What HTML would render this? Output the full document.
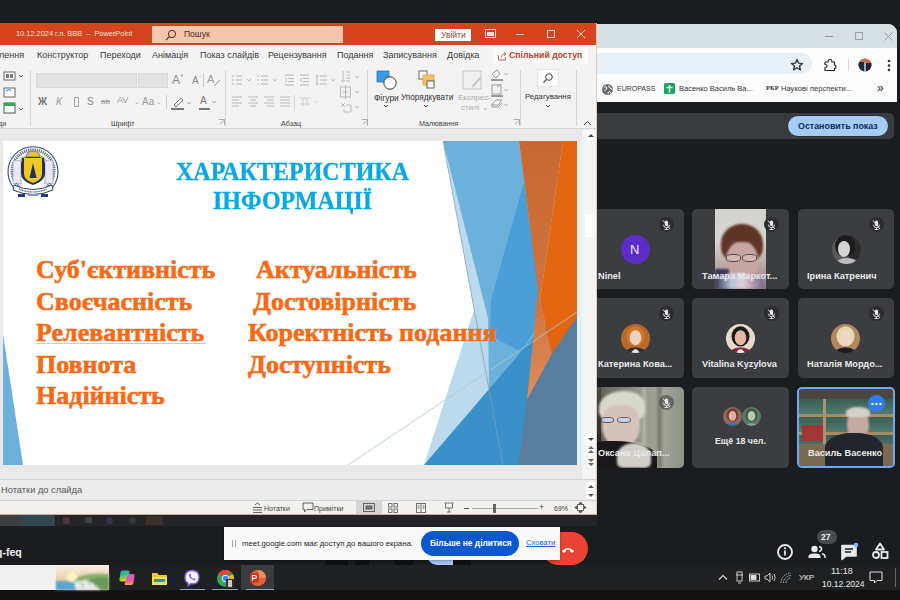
<!DOCTYPE html>
<html><head><meta charset="utf-8">
<style>
*{box-sizing:border-box;margin:0;padding:0}
html,body{width:900px;height:600px;overflow:hidden;background:#1b1c1f;font-family:"Liberation Sans",sans-serif}
.a{position:absolute}
.t{position:absolute;white-space:nowrap;line-height:1}
svg{position:absolute;overflow:visible}
.tab{position:absolute;top:51px;font-size:9px;color:#3a3a3a;white-space:nowrap;line-height:1}
.lbl{position:absolute;font-size:7.2px;color:#444;white-space:nowrap;line-height:1}
.sep{position:absolute;width:1px;background:#d6d6d6}
.nm{position:absolute;font-size:9.2px;font-weight:bold;color:#eaeaea;white-space:nowrap;line-height:1}
.tile{position:absolute;background:#3b3d40;border-radius:5px;overflow:hidden}
.mic{position:absolute;width:15px;height:15px;border-radius:50%;background:#2c2d30}
</style></head><body>
<!-- top dark band -->
<div class="a" style="left:0;top:0;width:900px;height:24px;background:#1b1c20"></div>

<!-- ===== Chrome window ===== -->
<div class="a" style="left:590px;top:24px;width:307px;height:78px;background:#fdfdfd;border-radius:0 9px 0 0;overflow:hidden">
  <div class="a" style="left:0;top:0;width:307px;height:24px;background:#d7e1e4"></div>
  <div class="a" style="left:0;top:29px;width:222px;height:21px;background:#e8f0f8;border-radius:0 11px 11px 0"></div>
</div>
<div class="a" style="left:825px;top:36px;width:8px;height:1px;background:#8a9096"></div>
<div class="a" style="left:855px;top:32px;width:8px;height:8px;border:1px solid #9aa0a6"></div>
<svg style="left:884px;top:32px" width="9" height="9"><path d="M0.5 0.5L8.5 8.5M8.5 0.5L0.5 8.5" stroke="#9aa0a6" stroke-width="1"/></svg>
<svg style="left:790px;top:58px" width="14" height="14"><path d="M7 1.5L8.6 5.2L12.5 5.5L9.5 8L10.5 12L7 9.8L3.5 12L4.5 8L1.5 5.5L5.4 5.2Z" fill="none" stroke="#2a2a2a" stroke-width="1.2" stroke-linejoin="round"/></svg>
<svg style="left:823px;top:58px" width="14" height="14"><path d="M2 4H5Q5 1.5 7 1.5Q9 1.5 9 4H11.5V7Q13 7 13 8.7Q13 10.4 11.5 10.4V12.5H2V9.5Q4 9.5 4 8Q4 6.5 2 6.5Z" fill="none" stroke="#2a2a2a" stroke-width="1.2" stroke-linejoin="round"/></svg>
<div class="a" style="left:848px;top:59px;width:1px;height:12px;background:#d6d6d6"></div>
<svg style="left:858px;top:58px" width="14" height="14"><defs><clipPath id="avc"><circle cx="7" cy="7" r="6.5"/></clipPath></defs><g clip-path="url(#avc)"><rect width="14" height="14" fill="#d8603a"/><rect x="0" y="4" width="6" height="10" fill="#1e2a36"/><rect x="8" y="5" width="6" height="9" fill="#2a2030"/><rect x="6" y="3" width="2" height="11" fill="#8ab0d0"/><rect x="0" y="0" width="14" height="4" fill="#c8704a"/></g></svg>
<svg style="left:887px;top:59px" width="4" height="13"><circle cx="2" cy="2" r="1.3" fill="#333"/><circle cx="2" cy="6.5" r="1.3" fill="#333"/><circle cx="2" cy="11" r="1.3" fill="#333"/></svg>
<svg style="left:601px;top:83px" width="13" height="13"><circle cx="6.5" cy="6.5" r="5.5" fill="#6a6d72"/><path d="M3 4Q5 3 6 5Q5 7 3.5 7.5M8 2.5Q7.5 4.5 9 5Q11 5 11 7M7 11Q7 9 8.5 8.5Q10 9 9.5 10.5" fill="none" stroke="#fff" stroke-width="1"/></svg>
<div class="t" style="left:617px;top:85px;font-size:7px;color:#333">EUROPASS</div>
<div class="a" style="left:664px;top:83px;width:11px;height:11px;background:#1aa260;border-radius:1.5px"></div>
<svg style="left:664px;top:83px" width="11" height="11"><path d="M5.5 2V9.5M2.5 4.5H8.5" stroke="#fff" stroke-width="1.5"/></svg>
<div class="t" style="left:679px;top:84.5px;font-size:7.5px;color:#333">Васенко Василь Ва...</div>
<div class="t" style="left:766px;top:85px;font-size:6.5px;font-weight:bold;color:#333;font-family:'Liberation Serif'">РКР</div>
<div class="t" style="left:781px;top:84.5px;font-size:7.6px;color:#333">Наукові перспекти...</div>
<div class="t" style="left:877px;top:82px;font-size:12px;color:#333">»</div>

<!-- ===== Meet share bar ===== -->
<div class="a" style="left:590px;top:113px;width:304px;height:26px;background:#393b3e;border-radius:0 5px 5px 0"></div>
<div class="a" style="left:787px;top:115px;width:102px;height:22px;background:#a6cbf7;border-radius:11px;border:1px solid #22303c"></div>
<div class="t" style="left:798px;top:121.5px;font-size:8.9px;font-weight:bold;color:#0f2d5e">Остановить показ</div>

<!-- ===== Meet tiles ===== -->
<div class="tile" style="left:587px;top:209px;width:97px;height:80px"></div>
<div class="a" style="left:621px;top:235px;width:29px;height:29px;border-radius:50%;background:#5b2dc8"></div>
<div class="t" style="left:630px;top:243px;font-size:13px;color:#f0e8ff">N</div>
<div class="nm" style="left:598px;top:272px">Ninel</div>

<div class="tile" style="left:692px;top:209px;width:97px;height:80px"></div>
<div class="a" style="left:715px;top:209px;width:51px;height:80px;overflow:hidden;background:linear-gradient(180deg,#d2d2ce 0,#d8d6d2 40%,#b8aaa4 70%,#8a7a88 100%)">
  <div class="a" style="left:6px;top:15px;width:42px;height:38px;border-radius:50% 50% 38% 38%;background:#5e3424;filter:blur(1px)"></div>
  <div class="a" style="left:11px;top:33px;width:32px;height:44px;border-radius:42% 42% 48% 48%;background:#c7a5a2;filter:blur(0.8px)"></div>
  <div class="a" style="left:11px;top:45px;width:15px;height:8px;border-radius:40%;border:1px solid #5a4a4a;background:#d4b8b8"></div>
  <div class="a" style="left:27px;top:45px;width:15px;height:8px;border-radius:40%;border:1px solid #5a4a4a;background:#d4b8b8"></div>
  <div class="a" style="left:0;top:60px;width:14px;height:20px;background:#3a3550;filter:blur(1px)"></div>
  <div class="a" style="left:2px;top:64px;width:47px;height:16px;border-radius:40% 40% 0 0;background:linear-gradient(90deg,#4a4a6a 0,#b8c4d8 30%,#e0d0d8 55%,#7a6a8a 100%);filter:blur(0.8px)"></div>
</div>
<div class="nm" style="left:702px;top:272px">Тамара Маркот...</div>

<div class="tile" style="left:798px;top:209px;width:96px;height:80px"></div>
<svg style="left:831px;top:234px" width="31" height="31"><defs><clipPath id="cir"><circle cx="15.5" cy="15.5" r="14.5"/></clipPath><filter id="fir"><feGaussianBlur stdDeviation="0.7"/></filter></defs><g clip-path="url(#cir)" filter="url(#fir)"><rect width="31" height="31" fill="#5a5a5a"/><rect x="18" width="13" height="31" fill="#2a2a2a"/><ellipse cx="14" cy="12" rx="10" ry="11" fill="#1e1e1e"/><ellipse cx="13" cy="15" rx="6" ry="8" fill="#d4d4d4"/><ellipse cx="16" cy="31" rx="12" ry="7" fill="#bdbdbd"/></g></svg>
<div class="nm" style="left:807px;top:272px">Ірина Катренич</div>

<div class="tile" style="left:587px;top:298px;width:97px;height:80px"></div>
<svg style="left:620.0px;top:322.5px" width="31.0" height="31.0"><defs><clipPath id="cka"><circle cx="15.5" cy="15.5" r="14.5"/></clipPath><filter id="fka"><feGaussianBlur stdDeviation="0.6"/></filter></defs><g clip-path="url(#cka)" filter="url(#fka)"><rect width="31.0" height="31.0" fill="#b86a2a"/><ellipse cx="15.5" cy="13.325" rx="8.99" ry="10.149999999999999" fill="#d0782e"/><ellipse cx="15.5" cy="14.774999999999999" rx="5.800000000000001" ry="7.54" fill="#f0d2c0"/><ellipse cx="15.5" cy="33.0" rx="12.325" ry="8.7" fill="#2c3038"/><path d="M10.5 31.0Q15.5 21.5 20.5 31.0Z" fill="#e8e8e8"/></g></svg>
<div class="nm" style="left:598px;top:360px">Катерина Кова...</div>

<div class="tile" style="left:692px;top:298px;width:97px;height:80px"></div>
<svg style="left:725.0px;top:322.5px" width="31.0" height="31.0"><defs><clipPath id="cvi"><circle cx="15.5" cy="15.5" r="14.5"/></clipPath><filter id="fvi"><feGaussianBlur stdDeviation="0.6"/></filter></defs><g clip-path="url(#cvi)" filter="url(#fvi)"><rect width="31.0" height="31.0" fill="#e8dcc8"/><ellipse cx="15.5" cy="13.325" rx="8.99" ry="10.149999999999999" fill="#1e1a1c"/><ellipse cx="15.5" cy="14.774999999999999" rx="5.800000000000001" ry="7.54" fill="#e2b8a4"/><ellipse cx="15.5" cy="33.0" rx="12.325" ry="8.7" fill="#8a2a30"/><path d="M10.5 31.0Q15.5 21.5 20.5 31.0Z" fill="#f0f0f0"/></g></svg>
<div class="nm" style="left:702px;top:360px">Vitalina Kyzylova</div>

<div class="tile" style="left:798px;top:298px;width:96px;height:80px"></div>
<svg style="left:830.0px;top:322.5px" width="31.0" height="31.0"><defs><clipPath id="cna"><circle cx="15.5" cy="15.5" r="14.5"/></clipPath><filter id="fna"><feGaussianBlur stdDeviation="0.6"/></filter></defs><g clip-path="url(#cna)" filter="url(#fna)"><rect width="31.0" height="31.0" fill="#b08860"/><ellipse cx="15.5" cy="13.325" rx="8.99" ry="10.149999999999999" fill="#e8d8b0"/><ellipse cx="15.5" cy="14.774999999999999" rx="5.800000000000001" ry="7.54" fill="#f0d8c8"/><ellipse cx="15.5" cy="33.0" rx="12.325" ry="8.7" fill="#1c1e22"/></g></svg>
<div class="nm" style="left:807px;top:360px">Наталія Мордо...</div>

<div class="tile" style="left:587px;top:387px;width:97px;height:81px;background:linear-gradient(90deg,#3a3c36 0,#6a6c62 20%,#8e9286 50%,#a3a699 75%,#8f9388 100%)">
  <div class="a" style="left:0;top:0;width:14px;height:81px;background:linear-gradient(180deg,#4a4a44,#1a1a1a)"></div>
  <div class="a" style="left:55px;top:0;width:4px;height:81px;background:#b0b2a6;filter:blur(1px)"></div>
  <div class="a" style="left:70px;top:0;width:5px;height:81px;background:#7d8074;filter:blur(1px)"></div>
  <div class="a" style="left:12px;top:4px;width:46px;height:30px;border-radius:55% 45% 30% 30%;background:#d9d8ce;filter:blur(1.2px)"></div>
  <div class="a" style="left:15px;top:18px;width:38px;height:42px;border-radius:40% 40% 48% 48%;background:#d6c2bc;filter:blur(1px)"></div>
  <div class="a" style="left:14px;top:30px;width:13px;height:6px;border-radius:40%;background:#c8d2e8;border:1px solid #6a5a5a"></div>
  <div class="a" style="left:30px;top:30px;width:14px;height:6px;border-radius:40%;background:#c8d2e8;border:1px solid #6a5a5a"></div>
  <div class="a" style="left:0;top:54px;width:70px;height:27px;border-radius:30% 60% 0 0;background:#18181a"></div>
  <div class="a" style="left:30px;top:56px;width:34px;height:25px;border-radius:50% 50% 20% 20%;background:#d2cec8;filter:blur(1px)"></div>
</div>
<div class="nm" style="left:598px;top:449px">Оксана Цалап...</div>

<div class="tile" style="left:692px;top:387px;width:97px;height:81px"></div>
<svg style="left:721.5px;top:406.0px" width="21.0" height="21.0"><defs><clipPath id="ce1"><circle cx="10.5" cy="10.5" r="9.5"/></clipPath><filter id="fe1"><feGaussianBlur stdDeviation="0.6"/></filter></defs><g clip-path="url(#ce1)" filter="url(#fe1)"><rect width="21.0" height="21.0" fill="#8a6a60"/><ellipse cx="10.5" cy="9.075" rx="5.89" ry="6.6499999999999995" fill="#7a3a2a"/><ellipse cx="10.5" cy="10.025" rx="3.8000000000000003" ry="4.94" fill="#e0b0a0"/><ellipse cx="10.5" cy="23.0" rx="8.075" ry="5.7" fill="#2a7ab0"/></g></svg>
<svg style="left:740.5px;top:406.0px" width="21.0" height="21.0"><defs><clipPath id="ce2"><circle cx="10.5" cy="10.5" r="9.5"/></clipPath><filter id="fe2"><feGaussianBlur stdDeviation="0.6"/></filter></defs><g clip-path="url(#ce2)" filter="url(#fe2)"><rect width="21.0" height="21.0" fill="#5a7a60"/><ellipse cx="10.5" cy="9.075" rx="5.89" ry="6.6499999999999995" fill="#3a5a40"/><ellipse cx="10.5" cy="10.025" rx="3.8000000000000003" ry="4.94" fill="#b8c8b0"/><ellipse cx="10.5" cy="23.0" rx="8.075" ry="5.7" fill="#8aa898"/></g></svg>
<div class="nm" style="left:715px;top:437px;font-size:8.8px">Ещё 18 чел.</div>

<div class="tile" style="left:797px;top:387px;width:98px;height:81px;border:2px solid #6ea9f4;background:#5a5548"></div>
<div class="a" style="left:799px;top:389px;width:94px;height:77px;border-radius:4px;overflow:hidden;background:#6e6250">
  <div class="a" style="left:0;top:0;width:94px;height:10px;background:#4a4840"></div>
  <div class="a" style="left:0;top:10px;width:94px;height:50px;background:repeating-linear-gradient(180deg,#3d5e55 0,#4f7a70 15px,#a58a66 15px,#a58a66 18px)"></div>
  <div class="a" style="left:3px;top:36px;width:22px;height:16px;background:#a03636"></div>
  <div class="a" style="left:24px;top:10px;width:3px;height:55px;background:#b09070"></div>
  <div class="a" style="left:0;top:55px;width:94px;height:22px;background:#7a6a52"></div>
  <div class="a" style="left:48px;top:22px;width:22px;height:28px;border-radius:45%;background:#c4aaa0;filter:blur(0.8px)"></div>
  <div class="a" style="left:47px;top:18px;width:24px;height:10px;border-radius:50% 50% 20% 20%;background:#d4d2cc;filter:blur(0.8px)"></div>
  <div class="a" style="left:26px;top:44px;width:58px;height:33px;border-radius:45% 45% 0 0;background:#22252c"></div>
</div>
<div class="a" style="left:868px;top:395px;width:17px;height:17px;border-radius:50%;background:#2f7de8"></div>
<svg style="left:870px;top:402px" width="13" height="4"><circle cx="2.5" cy="2" r="1.2" fill="#fff"/><circle cx="6.5" cy="2" r="1.2" fill="#fff"/><circle cx="10.5" cy="2" r="1.2" fill="#fff"/></svg>
<div class="nm" style="left:808px;top:449px">Василь Васенко</div>

<!-- mute icons -->
<div class="mic" style="left:659px;top:217px"></div>
<div class="mic" style="left:764px;top:217px"></div>
<div class="mic" style="left:869px;top:217px"></div>
<div class="mic" style="left:659px;top:306px"></div>
<div class="mic" style="left:764px;top:306px"></div>
<div class="mic" style="left:869px;top:306px"></div>
<div class="mic" style="left:659px;top:395px;background:rgba(60,60,60,0.55)"></div>
<svg style="left:0;top:0" width="900" height="600">
 <defs><g id="mu"><rect x="-1.6" y="-4" width="3.2" height="5.5" rx="1.6" fill="#e8e8e8"/><path d="M-3 0.2Q-3 3.2 0 3.2Q3 3.2 3 0.2M0 3.2V5M-2 5H2" stroke="#e8e8e8" fill="none" stroke-width="0.9"/><path d="M-3.5 -4L3.5 4.5" stroke="#e8e8e8" stroke-width="1"/></g></defs>
 <use href="#mu" x="666.5" y="224.5"/><use href="#mu" x="771.5" y="224.5"/><use href="#mu" x="876.5" y="224.5"/>
 <use href="#mu" x="666.5" y="313.5"/><use href="#mu" x="771.5" y="313.5"/><use href="#mu" x="876.5" y="313.5"/>
 <use href="#mu" x="666.5" y="402.5"/>
</svg>

<!-- meet bottom controls -->
<div class="a" style="left:542px;top:532px;width:46px;height:33px;border-radius:17px;background:#ea4335"></div>
<svg style="left:561px;top:545px" width="14" height="10"><path d="M1 6Q7 0 13 6L11.5 8L9 6.5V5Q7 4 5 5V6.5L2.5 8Z" fill="#fff"/></svg>
<div class="a" style="left:394px;top:550px;width:20px;height:15px;border-radius:10px 10px 0 0;background:#0f1012"></div>
<div class="a" style="left:427px;top:545px;width:37px;height:20px;border-radius:10px;background:#a8c7fa"></div>
<div class="a" style="left:326px;top:550px;width:22px;height:15px;border-radius:11px 11px 0 0;background:#0f1012"></div>
<div class="a" style="left:453px;top:550px;width:18px;height:15px;border-radius:9px 9px 0 0;background:#0f1012"></div>
<div class="a" style="left:355px;top:553px;width:14px;height:12px;border-radius:7px 7px 0 0;background:#0f1012"></div>
<svg style="left:776px;top:543px" width="18" height="18"><circle cx="9" cy="9" r="7" fill="none" stroke="#e8eaed" stroke-width="1.9"/><rect x="8.1" y="7.5" width="1.8" height="5" fill="#e8eaed"/><circle cx="9" cy="5.3" r="1.1" fill="#e8eaed"/></svg>
<svg style="left:807px;top:543px" width="20" height="18"><circle cx="7.5" cy="6" r="3.2" fill="#e8eaed"/><path d="M1.5 15V13.5Q1.5 10.5 7.5 10.5Q13.5 10.5 13.5 13.5V15Z" fill="#e8eaed"/><path d="M12 3.5Q14.5 4 14.5 6Q14.5 8 12 8.5M15 10.8Q18 11.5 18 13.5V15" fill="none" stroke="#e8eaed" stroke-width="1.5"/></svg>
<div class="a" style="left:817px;top:530px;width:20px;height:14px;border-radius:7px;background:#4a4d50"></div>
<div class="t" style="left:821px;top:533px;font-size:8.5px;font-weight:bold;color:#e8eaed">27</div>
<svg style="left:840px;top:543px" width="20" height="20"><path d="M2 2.5H16V13H6L2 16.5Z" fill="#e8eaed" stroke="#e8eaed" stroke-width="1.6" stroke-linejoin="round"/><path d="M5 6H13M5 9H11" stroke="#1b1c1f" stroke-width="1.5"/><circle cx="16" cy="2" r="2.2" fill="#8ab4f8"/></svg>
<svg style="left:871px;top:542px" width="18" height="19"><path d="M9 1.5L13 7.5H5Z" fill="none" stroke="#e8eaed" stroke-width="1.8" stroke-linejoin="round"/><circle cx="5" cy="13" r="3" fill="none" stroke="#e8eaed" stroke-width="1.8"/><rect x="10.5" y="10" width="6" height="6" fill="none" stroke="#e8eaed" stroke-width="1.8"/></svg>
<div class="t" style="left:-4px;top:547px;font-size:10.5px;font-weight:bold;color:#f2f2f2">q-feq</div>

<!-- ===== PowerPoint window ===== -->
<div class="a" style="left:0;top:23px;width:597px;height:492px;background:#f3f3f3"></div>
<!-- title bar -->
<div class="a" style="left:0;top:23px;width:597px;height:22px;background:#d3441f"></div>
<div class="t" style="left:16px;top:30px;font-size:7.4px;color:#fbe3d8">10.12.2024 г.л. BBB&nbsp;&nbsp;–&nbsp;&nbsp;PowerPoint</div>
<div class="a" style="left:152px;top:26px;width:191px;height:17px;background:#f7c4ae"></div>
<svg style="left:165px;top:29px" width="12" height="12"><circle cx="7" cy="5" r="3.6" fill="none" stroke="#5a2a1a" stroke-width="1"/><line x1="4.4" y1="7.6" x2="1" y2="11" stroke="#5a2a1a" stroke-width="1.1"/></svg>
<div class="t" style="left:184px;top:30px;font-size:8.5px;color:#4a2418">Пошук</div>
<div class="a" style="left:435px;top:29px;width:36px;height:12px;background:#fbfbfb"></div>
<div class="t" style="left:441px;top:31px;font-size:8.5px;color:#8a4a3a">Увійти</div>
<!-- window controls -->
<svg style="left:485px;top:29px" width="12" height="10"><rect x="0.5" y="0.5" width="10" height="8" fill="none" stroke="#fbe0d5" stroke-width="1"/><rect x="2" y="3" width="7" height="4" fill="#fbe0d5"/></svg>
<div class="a" style="left:516px;top:34px;width:8px;height:1px;background:#fbe0d5"></div>
<div class="a" style="left:547px;top:30px;width:8px;height:8px;border:1px solid #fbe0d5"></div>
<svg style="left:576px;top:29px" width="10" height="10"><path d="M1 1L9 9M9 1L1 9" stroke="#fbe0d5" stroke-width="1"/></svg>

<!-- tabs -->
<div class="tab" style="left:-1px">лення</div>
<div class="tab" style="left:37px">Конструктор</div>
<div class="tab" style="left:100px">Переходи</div>
<div class="tab" style="left:152px">Анімація</div>
<div class="tab" style="left:200px">Показ слайдів</div>
<div class="tab" style="left:268px">Рецензування</div>
<div class="tab" style="left:337px">Подання</div>
<div class="tab" style="left:383px">Записування</div>
<div class="tab" style="left:447px">Довідка</div>
<div class="a" style="left:493px;top:48px;width:95px;height:16px;background:#fafafa"></div>
<svg style="left:497px;top:51px" width="10" height="10"><path d="M1.5 4.5V9H8.5V6M4 6.5C4.5 4 6 3 8.5 3M7 1.2L9 3L7 4.8" fill="none" stroke="#b5523a" stroke-width="0.9"/></svg>
<div class="t" style="left:509px;top:51px;font-size:8.7px;font-weight:bold;color:#b8412a">Спільний доступ</div>

<!-- ribbon -->
<div class="a" style="left:0;top:128px;width:597px;height:1px;background:#d8d8d8"></div>
<div class="sep" style="left:30px;top:70px;height:56px"></div>
<div class="sep" style="left:225px;top:70px;height:56px"></div>
<div class="sep" style="left:367px;top:70px;height:56px"></div>
<div class="sep" style="left:520px;top:70px;height:56px"></div>
<div class="sep" style="left:576px;top:70px;height:56px"></div>
<!-- left group icons -->
<svg style="left:2px;top:70px" width="26" height="46">
 <rect x="2" y="2" width="11" height="8" fill="#fff" stroke="#666" stroke-width="1"/><rect x="4" y="4" width="3" height="4" fill="#777"/><rect x="8" y="4" width="3" height="4" fill="#777"/><path d="M17 5L19 7L21 5" stroke="#666" fill="none"/>
 <rect x="2" y="18" width="11" height="9" fill="#fff" stroke="#666" stroke-width="1"/><path d="M4 21Q7 18 9 21" stroke="#2a8ad0" fill="none" stroke-width="1.2"/>
 <rect x="2" y="33" width="11" height="10" fill="#fff" stroke="#555" stroke-width="1"/><rect x="2" y="33" width="11" height="3" fill="#3aa55a"/><path d="M17 38L19 40L21 38" stroke="#666" fill="none"/>
</svg>
<div class="lbl" style="left:-2px;top:120px">ди</div>
<!-- font group -->
<div class="a" style="left:36px;top:73px;width:101px;height:15px;background:#e2e2e2;border:1px solid #d8d8d8"></div>
<div class="a" style="left:138px;top:73px;width:30px;height:15px;background:#e2e2e2;border:1px solid #d8d8d8"></div>
<div class="t" style="left:172px;top:74px;font-size:12px;color:#888">A</div><div class="t" style="left:180px;top:72px;font-size:6px;color:#888">+</div>
<div class="t" style="left:192px;top:76px;font-size:10px;color:#888">A</div><div class="t" style="left:199px;top:73px;font-size:6px;color:#888">-</div>
<div class="sep" style="left:203px;top:73px;height:14px;background:#ccc"></div>
<div class="t" style="left:207px;top:74px;font-size:11px;color:#999">A</div><svg style="left:213px;top:79px" width="8" height="8"><path d="M1 7L7 1" stroke="#999"/></svg>
<div class="t" style="left:38px;top:97px;font-size:10px;font-weight:bold;color:#777">Ж</div>
<div class="t" style="left:56px;top:97px;font-size:10px;font-style:italic;color:#999">К</div>
<div class="a" style="left:74px;top:97px;width:5px;height:10px;border:1px solid #aaa"></div>
<div class="t" style="left:87px;top:97px;font-size:10px;color:#888">S</div>
<div class="t" style="left:101px;top:98px;font-size:8px;color:#999;text-decoration:line-through">ab</div>
<div class="t" style="left:117px;top:96px;font-size:9px;color:#999">AV</div><div class="t" style="left:134px;top:98px;font-size:7px;color:#aaa">⌄</div>
<div class="t" style="left:142px;top:97px;font-size:10px;color:#999">Aa</div><div class="t" style="left:156px;top:98px;font-size:7px;color:#aaa">⌄</div>
<div class="sep" style="left:166px;top:95px;height:14px;background:#ccc"></div>
<svg style="left:170px;top:95px" width="24" height="16"><path d="M4 10L11 3L13 5L6 12Z" fill="none" stroke="#777" stroke-width="1"/><rect x="1" y="13" width="13" height="2" fill="#777"/><path d="M17 7L19 9L21 7" stroke="#aaa" fill="none"/></svg>
<div class="t" style="left:200px;top:96px;font-size:10px;color:#777">A</div><div class="a" style="left:199px;top:108px;width:11px;height:2px;background:#777"></div><svg style="left:211px;top:100px" width="8" height="6"><path d="M1 1L3 3L5 1" stroke="#aaa" fill="none"/></svg>
<div class="lbl" style="left:111px;top:120px">Шрифт</div>
<svg style="left:218px;top:119px" width="7" height="7"><path d="M0.5 0.5H6.5V6.5M2 5L6 1.5" stroke="#999" fill="none" stroke-width="0.8"/></svg>
<!-- paragraph group -->
<svg style="left:225px;top:65px" width="140" height="60" stroke="#b4b4b4" fill="none" stroke-width="0.9">
 <path d="M7 11H9M11 11H17M7 15H9M11 15H17M7 19H9M11 19H17"/><path d="M22 14L24 16L26 14"/>
 <path d="M33 10V12M33 14V16M33 18V20M36 11H43M36 15H43M36 19H43"/><path d="M48 14L50 16L52 14"/>
 <path d="M60 10H69M63 13.5H69M63 16.5H69M60 20H69M60 13L62 15L60 17"/>
 <path d="M75 10H84M78 13.5H84M78 16.5H84M75 20H84M77 13L75 15L77 17"/>
 <path d="M92 10V20M90.5 11.5L92 10L93.5 11.5M90.5 18.5L92 20L93.5 18.5M95 11H102M95 15H102M95 19H102"/><path d="M106 14L108 16L110 14"/>
 <path d="M7 32H17M7 35H14M7 38H17M7 41H14"/>
 <path d="M23 32H33M25 35H31M23 38H33M25 41H31"/>
 <path d="M39 32H49M42 35H49M39 38H49M42 41H49"/>
 <path d="M55 32H65M55 35H65M55 38H65M55 41H65"/>
 <path d="M75 33H85M75 39H85M78 33V41M82 33V41" stroke="#cfcfcf"/><path d="M89 36L91 38L93 36" stroke="#cfcfcf"/>
 <path d="M118 6V17M116 15L118 17L120 15M121 7H125M122 10H125M121 13H125M121 16H125"/><path d="M130 11L132 13L134 11"/>
 <rect x="115.5" y="22" width="10" height="10"/><path d="M120.5 20V34M118 27H123"/><path d="M130 26L132 28L134 26"/>
 <path d="M116 38L120 42M116 42L120 38M121 40H126V47H119V44"/><path d="M130 41L132 43L134 41"/>
</svg>
<div class="sep" style="left:294px;top:95px;height:16px;background:#d4d4d4"></div>
<div class="lbl" style="left:281px;top:120px">Абзац</div>
<svg style="left:361px;top:119px" width="7" height="7"><path d="M0.5 0.5H6.5V6.5M2 5L6 1.5" stroke="#999" fill="none" stroke-width="0.8"/></svg>
<!-- drawing group -->
<svg style="left:372px;top:68px" width="145" height="48">
 <rect x="5" y="3" width="12" height="11" fill="#3a9ae0" stroke="#2a7ac0" stroke-width="0.8"/>
 <circle cx="18" cy="15" r="6.2" fill="#fff" stroke="#333" stroke-width="1"/>
 <path d="M12 37L14 39L16 37" stroke="#555" fill="none"/>
 <rect x="47" y="3" width="8" height="8" fill="#fff" stroke="#555" stroke-width="0.9"/>
 <rect x="51" y="7" width="11" height="10" fill="#f5c26a" stroke="#d9a040" stroke-width="0.8"/>
 <rect x="55" y="13" width="7" height="7" fill="#fff" stroke="#555" stroke-width="0.9"/>
 <path d="M52 37L54 39L56 37" stroke="#555" fill="none"/>
 <rect x="91" y="3" width="18" height="18" fill="#f0f0f0" stroke="#c6c6c6" stroke-width="1"/>
 <path d="M100 19L109 9" stroke="#c9c9c9" stroke-width="2"/>
 <path d="M120 6L125 2L128 6L124 10Z" fill="none" stroke="#9a9a9a"/><rect x="119" y="11" width="12" height="2" fill="#9a9a9a"/><path d="M132 5L134 7L136 5" stroke="#bbb" fill="none"/>
 <rect x="120" y="17" width="9" height="9" fill="none" stroke="#9a9a9a"/><path d="M125 19L129 16" stroke="#9a9a9a"/><rect x="119" y="27" width="12" height="2" fill="#9a9a9a"/><path d="M132 21L134 23L136 21" stroke="#bbb" fill="none"/>
 <path d="M120 36L124 32H130L126 37H120ZM120 36V39H126L130 35" fill="none" stroke="#9a9a9a"/><path d="M132 36L134 38L136 36" stroke="#bbb" fill="none"/>
</svg>
<div class="t" style="left:374px;top:94px;font-size:8.4px;color:#333">Фігури</div>
<div class="t" style="left:401px;top:94px;font-size:8.2px;color:#333">Упорядкувати</div>
<div class="t" style="left:458px;top:94px;font-size:8px;color:#aaa">Експрес-</div>
<div class="t" style="left:461px;top:104px;font-size:8px;color:#b0b0b0">стилі ⌄</div>
<div class="lbl" style="left:419px;top:120px">Малювання</div>
<svg style="left:513px;top:119px" width="7" height="7"><path d="M0.5 0.5H6.5V6.5M2 5L6 1.5" stroke="#999" fill="none" stroke-width="0.8"/></svg>
<!-- editing -->
<div class="a" style="left:537px;top:69px;width:22px;height:18px;background:#fcfcfc;border:1px solid #e6e6e6"></div>
<svg style="left:542px;top:72px" width="12" height="12"><circle cx="7" cy="5" r="3.3" fill="none" stroke="#444" stroke-width="1"/><line x1="4.6" y1="7.4" x2="1.5" y2="10.5" stroke="#444" stroke-width="1.1"/></svg>
<div class="t" style="left:525px;top:93px;font-size:7.8px;color:#333">Редагування</div>
<svg style="left:545px;top:104px" width="8" height="6"><path d="M1 1L3 3L5 1" stroke="#555" fill="none"/></svg>
<svg style="left:583px;top:120px" width="10" height="7"><path d="M1 5L4.5 1.5L8 5" stroke="#444" fill="none" stroke-width="1"/></svg>

<!-- slide area background -->
<div class="a" style="left:0;top:129px;width:597px;height:351px;background:#e9e9e9"></div>
<div class="a" style="left:3px;top:141px;width:574px;height:324px;background:#fff"></div>
<!-- scrollbar -->
<div class="a" style="left:582px;top:130px;width:14px;height:350px;background:#f4f4f4"></div>


<!-- slide shapes -->
<svg style="left:0;top:0" width="900" height="600">
 <defs><clipPath id="sc"><rect x="3" y="141" width="574" height="324"/></clipPath>
 <linearGradient id="og" x1="0" y1="0" x2="0" y2="1"><stop offset="0" stop-color="#c86733"/><stop offset="0.6" stop-color="#d0733c"/><stop offset="1" stop-color="#e08c5c"/></linearGradient></defs>
 <g clip-path="url(#sc)">
  <polygon points="443,141 474,310 424,465 577,465 577,141" fill="#bcdaee"/>
  <polygon points="443,141 519,141 560,465 490,465 488,318" fill="#6cb1dc"/>
  <polygon points="524,182 539,290 535,330 521,352 490,335 491,300" fill="#4a9fd6"/>
  <polygon points="424,465 521,352 565,300 577,300 577,465" fill="#3a91ca"/>
  <polygon points="519,141 563,141 540,300 552,354 527,400 538,290" fill="url(#og)"/>
  <polygon points="563,141 577,141 577,317 552,354 540,300" fill="#e4650f"/>
  <polygon points="577,317 577,465 518,465 527,400 552,354" fill="#587d9d"/>
  <polygon points="3,334 23,465 3,465" fill="#6cb1dc"/>
  <line x1="443" y1="141" x2="503" y2="465" stroke="#7e9db5" stroke-width="0.7"/>
  <line x1="300" y1="497" x2="577" y2="312" stroke="#a9c6d6" stroke-width="0.8"/>
 </g>
</svg>
<!-- logo -->
<svg style="left:5px;top:144px" width="56" height="56">
 <path d="M12 47A25 25 0 1 1 44 47" fill="#fff" stroke="#3a4a86" stroke-width="1.1"/>
 <path d="M14.5 43A21 21 0 1 1 41.5 43" fill="none" stroke="#5a6896" stroke-width="3" stroke-dasharray="1.2 0.9"/>
 <path d="M17 40A17 17 0 1 1 39 40" fill="none" stroke="#8a94b4" stroke-width="0.8"/>
 <path d="M8 17Q12 15 16 17V40Q12 38 8 40Z" fill="#e8eaf0" stroke="#8a94b4" stroke-width="0.6"/>
 <path d="M48 17Q44 15 40 17V40Q44 38 48 40Z" fill="#e8eaf0" stroke="#8a94b4" stroke-width="0.6"/>
 <path d="M22 9Q28 5 34 9L35 13H21Z" fill="#e6c22e" stroke="#6a5a20" stroke-width="0.6"/>
 <path d="M17 14L22 13H34L39 14L40 20V30Q40 37 28 41Q16 37 16 30V20Z" fill="#2a3152"/>
 <path d="M19 14H37V30Q37 36 28 39Q19 36 19 30Z" fill="#ecc82a"/>
 <path d="M28 19L31.5 34H24.5Z" fill="#2a3048"/>
 <path d="M9 41Q28 50 47 41L48 46Q28 55 8 46Z" fill="#fff" stroke="#2f3f72" stroke-width="1"/>
 <path d="M14 45Q28 51 42 45" stroke="#3a4a7a" stroke-width="1.2" fill="none" stroke-dasharray="1 0.6"/>
 <rect x="13" y="50" width="7" height="3" fill="#1f3a7a"/><rect x="36" y="50" width="7" height="3" fill="#1f3a7a"/>
 <rect x="23" y="50" width="10" height="2" fill="#8a94b4"/>
</svg>
<!-- slide text -->
<div class="t" style="left:176px;top:158px;font:bold 25px 'Liberation Serif';color:#08a8e4;transform:scaleX(0.96);transform-origin:0 0;-webkit-text-stroke:0.3px #08a8e4">ХАРАКТЕРИСТИКА</div>
<div class="t" style="left:213px;top:187px;font:bold 25px 'Liberation Serif';color:#08a8e4;transform:scaleX(0.96);transform-origin:0 0;-webkit-text-stroke:0.3px #08a8e4">ІНФОРМАЦІЇ</div>

<div class="t" style="left:36px;top:254px;font:bold 26px 'Liberation Serif';color:#f76a16;line-height:31.5px;-webkit-text-stroke:0.6px #f76a16">Суб'єктивність<br>Своєчасність<br>Релевантність<br>Повнота<br>Надійність</div>

<div class="t" style="left:256px;top:254px;font:bold 26px 'Liberation Serif';color:#f76a16;line-height:31.5px;-webkit-text-stroke:0.6px #f76a16">Актуальність</div>
<div class="t" style="left:253px;top:285.5px;font:bold 26px 'Liberation Serif';color:#f76a16;line-height:31.5px;-webkit-text-stroke:0.6px #f76a16">Достовірність</div>
<div class="t" style="left:248px;top:317px;font:bold 26px 'Liberation Serif';color:#f76a16;line-height:31.5px;-webkit-text-stroke:0.6px #f76a16">Коректність подання</div>
<div class="t" style="left:248px;top:348.5px;font:bold 26px 'Liberation Serif';color:#f76a16;line-height:31.5px;-webkit-text-stroke:0.6px #f76a16">Доступність</div>

<div class="a" style="left:36px;top:343px;width:170px;height:1px;background:#f0a8c8;opacity:0.8"></div>
<!-- notes -->
<div class="a" style="left:0;top:479px;width:597px;height:1px;background:#d4d4d4"></div>
<div class="a" style="left:0;top:480px;width:597px;height:20px;background:#ececec"></div>
<div class="t" style="left:1px;top:486px;font-size:9.3px;color:#555">Нотатки до слайда</div>
<div class="a" style="left:0;top:500px;width:597px;height:1px;background:#d4d4d4"></div>

<!-- scrollbar details -->
<div class="a" style="left:577px;top:141px;width:5px;height:324px;background:#e4eef5"></div>
<div class="a" style="left:586px;top:131px;width:9px;height:9px;background:#fff"></div>
<svg style="left:587px;top:133px" width="8" height="5"><path d="M1 4L4 1L7 4Z" fill="#444"/></svg>
<div class="a" style="left:585px;top:214px;width:10px;height:23px;background:#fff"></div>
<div class="a" style="left:586px;top:434px;width:9px;height:9px;background:#fff"></div>
<svg style="left:587px;top:437px" width="8" height="5"><path d="M1 1L4 4L7 1Z" fill="#444"/></svg>
<svg style="left:587px;top:445px" width="8" height="22" fill="#666"><path d="M1 4L4 1L7 4ZM1 8L4 5L7 8Z"/><path d="M1 14L4 17L7 14ZM1 18L4 21L7 18Z"/></svg>
<div class="a" style="left:586px;top:482px;width:9px;height:8px;background:#fff"></div>
<svg style="left:587px;top:484px" width="8" height="5"><path d="M1 4L4 1L7 4Z" fill="#555"/></svg>
<div class="a" style="left:586px;top:491px;width:9px;height:8px;background:#fff"></div>
<svg style="left:587px;top:493px" width="8" height="5"><path d="M1 1L4 4L7 1Z" fill="#555"/></svg>
<div class="a" style="left:596px;top:23px;width:1px;height:492px;background:#e9c8b8"></div>
<div class="a" style="left:0;top:514px;width:597px;height:1px;background:#c9b0a0"></div>
<!-- status bar -->
<div class="a" style="left:0;top:501px;width:596px;height:13px;background:#f3f1ee"></div>
<svg style="left:252px;top:502px" width="11" height="11" stroke="#555" fill="none" stroke-width="0.9"><path d="M3 3L5.5 0.8L8 3M1 5.5H10M1 8H10M1 10.5H10"/></svg>
<div class="t" style="left:264px;top:505px;font-size:7px;color:#444">Нотатки</div>
<svg style="left:302px;top:502px" width="12" height="11" stroke="#555" fill="none" stroke-width="0.9"><path d="M1 1H11V7.5H5L2.5 10V7.5H1Z"/></svg>
<div class="t" style="left:314px;top:505px;font-size:7px;color:#444">Примітки</div>
<div class="a" style="left:356px;top:501px;width:26px;height:13px;background:#d6d6d6"></div>
<svg style="left:363px;top:503px" width="12" height="9" stroke="#555" fill="none" stroke-width="0.9"><rect x="0.5" y="0.5" width="11" height="8"/><rect x="3" y="3" width="6" height="3" fill="#777"/></svg>
<svg style="left:388px;top:503px" width="10" height="10" stroke="#666" fill="none" stroke-width="0.9"><rect x="0.5" y="0.5" width="3.5" height="3.5"/><rect x="6" y="0.5" width="3.5" height="3.5"/><rect x="0.5" y="6" width="3.5" height="3.5"/><rect x="6" y="6" width="3.5" height="3.5"/></svg>
<svg style="left:416px;top:503px" width="10" height="10" stroke="#666" fill="none" stroke-width="0.9"><rect x="0.5" y="0.5" width="9" height="9"/><path d="M5 0.5V9.5M1.5 3H3.5M1.5 5H3.5M6.5 3H8.5M6.5 5H8.5"/></svg>
<svg style="left:444px;top:502px" width="10" height="11" stroke="#666" fill="none" stroke-width="0.9"><path d="M0.5 1H9.5M1.5 1V6H8.5V1M5 6V10M3 10H7"/></svg>
<div class="a" style="left:464px;top:508px;width:5px;height:1px;background:#555"></div>
<div class="a" style="left:472px;top:508px;width:66px;height:1px;background:#aaa"></div>
<div class="a" style="left:493px;top:504px;width:3px;height:9px;background:#666"></div>
<div class="t" style="left:539px;top:503px;font-size:9px;color:#444">+</div>
<div class="t" style="left:554px;top:505px;font-size:7px;color:#444">69%</div>
<svg style="left:575px;top:502px" width="11" height="11" stroke="#555" fill="none" stroke-width="0.9"><rect x="2.5" y="2.5" width="6" height="6"/><path d="M5.5 0L4 1.5H7ZM5.5 11L4 9.5H7ZM0 5.5L1.5 4V7ZM11 5.5L9.5 4V7Z" fill="#555"/></svg>

<!-- ghost strip -->
<div class="a" style="left:0;top:515px;width:597px;height:11px;background:#232427"></div>
<div class="a" style="left:0;top:515px;width:55px;height:11px;background:linear-gradient(90deg,#3c3e3f 0,#3c3e3f 35%,#2f4a50 45%,#34464a 100%)"></div>
<div class="a" style="left:63px;top:517px;width:7px;height:7px;background:#5a3a3c;border-radius:2px;opacity:0.8"></div>
<div class="a" style="left:85px;top:517px;width:7px;height:6px;background:#404a3e;opacity:0.8"></div>
<div class="a" style="left:106px;top:517px;width:7px;height:7px;background:#3a3650;border-radius:50%;opacity:0.8"></div>
<div class="a" style="left:129px;top:517px;width:7px;height:7px;background:#34443a;border-radius:50%;opacity:0.8"></div>
<div class="a" style="left:146px;top:516px;width:17px;height:9px;background:#3e302c;opacity:0.9"></div>

<!-- notification -->
<div class="a" style="left:224px;top:527px;width:336px;height:33px;background:#f9f9f9;box-shadow:0 1px 3px rgba(0,0,0,0.3)"></div>
<div class="a" style="left:232px;top:540px;width:1px;height:7px;background:#aaa"></div>
<div class="a" style="left:235px;top:540px;width:1px;height:7px;background:#aaa"></div>
<div class="t" style="left:242px;top:540px;font-size:7.8px;color:#262626">meet.google.com має доступ до вашого екрана.</div>
<div class="a" style="left:421px;top:531px;width:98px;height:25px;background:#0b57d0;border-radius:13px"></div>
<div class="t" style="left:430px;top:539px;font-size:8.4px;font-weight:bold;color:#fff">Більше не ділитися</div>
<div class="t" style="left:526px;top:539px;font-size:7.6px;color:#1a5fc8;text-decoration:underline">Сховати</div>

<!-- taskbar -->
<div class="a" style="left:0;top:565px;width:900px;height:25px;background:#1f2022"></div>
<div class="a" style="left:0;top:590px;width:900px;height:10px;background:#121213"></div>
<div class="a" style="left:0;top:565px;width:56px;height:25px;background:#f1f1f1"></div>
<svg style="left:56px;top:565px" width="53" height="25"><defs><linearGradient id="sky" x1="0" y1="0" x2="0" y2="1"><stop offset="0" stop-color="#f6efe6"/><stop offset="0.5" stop-color="#f2d2b2"/><stop offset="1" stop-color="#e8b890"/></linearGradient><filter id="lsb"><feGaussianBlur stdDeviation="0.8"/></filter></defs>
<rect width="53" height="25" fill="url(#sky)"/>
<g filter="url(#lsb)"><circle cx="16" cy="12" r="5" fill="#fff4c0"/>
<path d="M10 25L22 12Q34 7 53 9V25Z" fill="#8ab070"/>
<path d="M28 25L34 14Q44 11 53 13V25Z" fill="#6a9a5a"/>
<path d="M0 16Q10 15 20 18L22 25H0Z" fill="#5aa8d0"/>
<path d="M18 17L30 15L40 20L44 25H20Z" fill="#e8eae6"/>
<path d="M24 18L28 20L26 23M32 17L35 21M38 19L41 23" stroke="#9aa0a8" stroke-width="1" fill="none"/></g>
</svg>

<!-- copilot -->
<svg style="left:118px;top:569px" width="19" height="17"><defs><linearGradient id="cpl" x1="0" y1="0" x2="0.3" y2="1"><stop offset="0" stop-color="#1a9af0"/><stop offset="0.5" stop-color="#3ac870"/><stop offset="1" stop-color="#f0d020"/></linearGradient><linearGradient id="cpr" x1="0" y1="0" x2="0" y2="1"><stop offset="0" stop-color="#c860e0"/><stop offset="0.6" stop-color="#f05a9a"/><stop offset="1" stop-color="#f8a040"/></linearGradient></defs>
<path d="M4 1.5H10Q12 1.5 11.5 3.5L9 11Q8.5 12.5 7 12.5H3Q1 12.5 1.5 10.5L2.5 3.5Q3 1.5 4 1.5Z" fill="url(#cpl)"/>
<path d="M11 5H15Q17 5 16.5 7L15.5 14Q15 16 13 16H8Q6 16 6.8 14L9 7Q9.5 5 11 5Z" fill="url(#cpr)"/>
</svg>
<!-- explorer -->
<svg style="left:151px;top:571px" width="17" height="15"><path d="M1 2H6L8 4H16V14H1Z" fill="#f5c542"/><rect x="1" y="6" width="15" height="8" fill="#ffd966"/><rect x="3" y="8" width="11" height="3" fill="#2a88d8"/></svg>
<!-- viber -->
<svg style="left:183px;top:569px" width="18" height="18"><path d="M9 1.5C4 1.5 2 3.5 2 8.5C2 11.5 3 13.3 5 14.2V17L7.5 14.8C8 14.9 8.5 14.9 9 14.9C14 14.9 16 12.9 16 8.2C16 3.5 14 1.5 9 1.5Z" fill="#f4f0fa" stroke="#7d5ad6" stroke-width="1.4"/><path d="M6 5.5Q6 10 11.5 11.5L12.5 10.3L11 9.2L10.2 9.8Q8.2 9 7.6 7L8.2 6.2L7.2 4.7Z" fill="#7d5ad6"/></svg>
<div class="a" style="left:180px;top:589px;width:25px;height:1px;background:#8aa6c8"></div>
<!-- chrome -->
<svg style="left:216px;top:569px" width="19" height="19"><circle cx="9.5" cy="9.5" r="8.5" fill="#34a853"/><path d="M9.5 1A8.5 8.5 0 0 1 16.9 5.3H9.5A4.3 4.3 0 0 0 5.8 7.4L2.1 5.3A8.5 8.5 0 0 1 9.5 1Z" fill="#ea4335"/><path d="M16.9 5.3A8.5 8.5 0 0 1 9.5 18L13.2 11.6A4.3 4.3 0 0 0 13.2 7.4Z" fill="#fbbc04"/><circle cx="9.5" cy="9.5" r="3.6" fill="#fff"/><circle cx="9.5" cy="9.5" r="2.8" fill="#4285f4"/><rect x="10" y="10" width="8" height="9" fill="#3a2a2a"/><rect x="12" y="11" width="4" height="7" fill="#d8c8c0"/></svg>
<div class="a" style="left:212px;top:589px;width:26px;height:1px;background:#8aa6c8"></div>
<!-- powerpoint -->
<div class="a" style="left:241px;top:565px;width:33px;height:25px;background:#3a3b3e"></div>
<svg style="left:248px;top:569px" width="19" height="18"><circle cx="10" cy="9" r="8" fill="#e8603a"/><path d="M10 1A8 8 0 0 1 18 9H10Z" fill="#f08a60"/><rect x="2" y="4" width="9" height="10" rx="1.5" fill="#c43e1c"/><path d="M4.5 11.5V6.5H6.8Q8.3 6.5 8.3 8Q8.3 9.5 6.8 9.5H4.5" fill="none" stroke="#fff" stroke-width="1.1"/></svg>
<div class="a" style="left:246px;top:589px;width:28px;height:1px;background:#8aa6c8"></div>
<!-- tray -->
<svg style="left:718px;top:574px" width="10" height="7"><path d="M1 5.5L5 1.5L9 5.5" fill="none" stroke="#ddd" stroke-width="1.1"/></svg>
<svg style="left:735px;top:571px" width="10" height="13" stroke="#ddd" fill="none" stroke-width="0.9"><rect x="2" y="1" width="5" height="9"/><path d="M1 4H8M3 12H6"/></svg>
<svg style="left:749px;top:573px" width="12" height="9" stroke="#ddd" fill="none" stroke-width="0.9"><rect x="0.5" y="1" width="10" height="7"/><rect x="2" y="2.5" width="5" height="4" fill="#ddd"/></svg>
<svg style="left:764px;top:572px" width="13" height="11" stroke="#ddd" fill="none" stroke-width="0.9"><path d="M1 4H3L6 1V10L3 7H1Z"/><path d="M8 3.5Q9.5 5.5 8 7.5M10 2Q12.5 5.5 10 9"/></svg>
<svg style="left:780px;top:572px" width="12" height="12" stroke="#ccc" fill="none" stroke-width="0.9"><path d="M1 11A10 10 0 0 1 11 1M3.5 11A7.5 7.5 0 0 1 11 3.5M6 11A5 5 0 0 1 11 6" stroke-dasharray="1.5 1"/></svg>
<div class="t" style="left:799px;top:574px;font-size:8px;color:#e8e8e8">УКР</div>
<div class="t" style="left:831px;top:567px;font-size:9px;color:#e8e8e8">11:18</div>
<div class="t" style="left:822px;top:580px;font-size:8.5px;color:#e8e8e8">10.12.2024</div>
<svg style="left:869px;top:571px" width="14" height="13" stroke="#ddd" fill="none" stroke-width="1"><path d="M1 1H13V9.5H8L5.5 12V9.5H1Z"/></svg>
<div class="a" style="left:895px;top:568px;width:1px;height:19px;background:#666"></div>
</body></html>
